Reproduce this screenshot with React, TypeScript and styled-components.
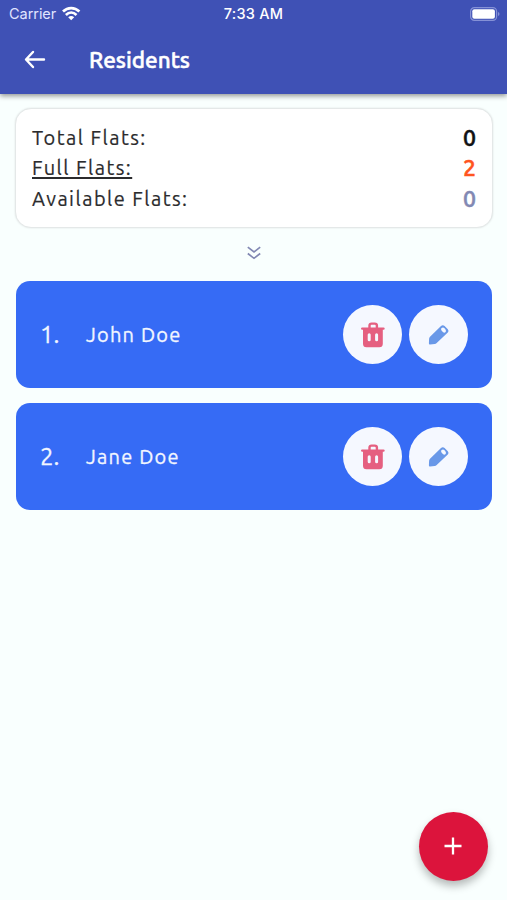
import React from "react";
import styled, { createGlobalStyle } from "styled-components";

const GlobalStyle = createGlobalStyle`
  *, *::before, *::after { box-sizing: border-box; }
  body { margin: 0; background: #f9fffe; }
`;

const Screen = styled.div`
  position: relative;
  height: 900px;
  overflow: hidden;
  background: #f9fffe;
  font-family: "Ubuntu", "Noto Sans", sans-serif;
  color: #2b2b2d;
`;

const Header = styled.header`
  height: 94px;
  background: #3f51b5;
  color: #fff;
  box-shadow: 0 2px 5px rgba(0, 0, 0, 0.42);
`;

const StatusBar = styled.div`
  display: grid;
  grid-template-columns: 1fr auto 1fr;
  align-items: center;
  height: 27px;
  padding: 0 7px 0 9px;
  font: 400 14.5px/27px Inter, sans-serif;
`;

const Carrier = styled.div`
  display: flex;
  align-items: center;
  gap: 6px;
  color: #e0e5ff;
  letter-spacing: -0.05px;
`;

const Clock = styled.time`
  margin-right: 2px;
  font-weight: 500;
  font-size: 14.5px;
  letter-spacing: 0.25px;
`;

const BatterySlot = styled.div`
  display: flex;
  justify-content: flex-end;
`;

const AppBar = styled.div`
  display: flex;
  align-items: center;
  height: 66px;
  padding-left: 23px;
`;

const IconButton = styled.button`
  display: flex;
  padding: 0;
  border: 0;
  background: none;
  color: inherit;
`;

const Title = styled.h1`
  margin: 0 0 0 42px;
  font-size: 22.5px;
  font-weight: 500;
  line-height: 30px;
  -webkit-text-stroke: 0.5px currentColor;
`;

const Summary = styled.section`
  height: 120px;
  margin: 14px 14px 0 15px;
  padding: 14px 16px 0 16px;
  border: 1px solid #e4e8e8;
  border-radius: 16px;
  background: #fff;
  box-shadow: 0 0 2px rgba(0, 0, 0, 0.12);
`;

const SummaryRow = styled.div`
  display: flex;
  justify-content: space-between;
  height: 30.4px;
  line-height: 30px;
`;

const Label = styled.span<{ $underlined?: boolean }>`
  font-size: 20px;
  font-weight: 400;
  letter-spacing: 1.45px;
  text-decoration: ${(p) => (p.$underlined ? "underline" : "none")};
  text-decoration-thickness: 1.5px;
  text-underline-offset: 2px;
  -webkit-text-stroke: 0.2px currentColor;
`;

const Count = styled.span<{ $color: string }>`
  color: ${(p) => p.$color};
  font-size: 23px;
  font-weight: 500;
  -webkit-text-stroke: 0.5px currentColor;
`;

const Expand = styled.div`
  display: flex;
  justify-content: center;
  height: 53px;
  padding-top: 16.5px;
`;

const List = styled.ul`
  display: grid;
  gap: 15px;
  margin: 0;
  padding: 0 15px 0 16px;
  list-style: none;
`;

const Resident = styled.li`
  display: flex;
  align-items: center;
  height: 107px;
  padding: 0 24px;
  border-radius: 14px;
  background: #366bf5;
  color: #f2f6ff;
  -webkit-text-stroke: 0.3px currentColor;
`;

const Index = styled.span`
  width: 46px;
  font-size: 24px;
  line-height: 30px;
`;

const Name = styled.span`
  flex: 1;
  font-size: 20px;
  line-height: 30px;
  letter-spacing: 1.2px;
`;

const Actions = styled.div`
  display: flex;
  gap: 7px;
`;

const RoundButton = styled.button<{ $color: string }>`
  display: flex;
  align-items: center;
  justify-content: center;
  width: 59px;
  height: 59px;
  padding: 0;
  border: 0;
  border-radius: 50%;
  background: #f5f8ff;
  color: ${(p) => p.$color};
`;

const AddButton = styled.button`
  position: absolute;
  right: 19.5px;
  bottom: 19.5px;
  display: flex;
  align-items: center;
  justify-content: center;
  width: 69px;
  height: 69px;
  padding: 0;
  border: 0;
  border-radius: 50%;
  background: #dc143c;
  color: #fff;
  box-shadow: 0 5px 9px rgba(0, 0, 0, 0.28);
`;

const WifiIcon = () => (
  <svg width="19" height="15" viewBox="0 0 19 15" fill="none" stroke="#fff" strokeWidth="2.7">
    <path d="M1 5.500C5.800 .9 12.600 .9 17.400 5.500" />
    <path d="M3.900 8.900C7.100 5.900 11.300 5.900 14.500 8.900" />
    <path d="M6.200 11.200Q9.200 8.700 12.200 11.200L9.200 14.300Z" fill="#fff" stroke="none" />
  </svg>
);

const BatteryIcon = () => (
  <svg width="30" height="14" viewBox="0 0 30 14">
    <rect x=".6" y=".6" width="26" height="12.8" rx="3.8" fill="none" stroke="#8591d6" strokeWidth="1.2" />
    <rect x="2.3" y="2.3" width="22.6" height="9.4" rx="2" fill="#fff" />
    <path d="M28 5c2 .7 2 3.300 0 4z" fill="#8591d6" />
  </svg>
);

const BackIcon = () => (
  <svg width="24" height="24" viewBox="0 0 24 24" fill="none" stroke="currentColor" strokeWidth="2.400" strokeLinecap="round" strokeLinejoin="round">
    <path d="M21 11.500H3.500M10 4L3 11.500l7 7.500" />
  </svg>
);

const ChevronsIcon = () => (
  <svg width="16" height="16" viewBox="0 0 16 16" fill="none" stroke="#8288b3" strokeWidth="1.7">
    <path d="M1.800 2.200L8 7l6.200-4.800M1.800 8.500L8 13.300l6.200-4.800" />
  </svg>
);

const TrashIcon = () => (
  <svg width="26" height="26" viewBox="0 0 26 26">
    <path
      d="M2.200 6.600h21.300M9.500 6V3.500Q9.500 1.600 11.500 1.600h3.200Q16.900 1.600 16.900 3.500V6"
      fill="none"
      stroke="currentColor"
      strokeWidth="2.400"
      strokeLinecap="round"
    />
    <path
      fill="currentColor"
      fillRule="evenodd"
      d="M3 6.500h19.800v15.300q0 3.500-3.500 3.500H6.500q-3.500 0-3.500-3.500zM9.200 11.200q-1.500 0-1.500 1.500v5.100q0 1.500 1.500 1.500t1.500-1.500v-5.100q0-1.500-1.500-1.500zm7.400 0q-1.500 0-1.500 1.500v5.100q0 1.500 1.500 1.500t1.500-1.500v-5.100q0-1.500-1.500-1.500z"
    />
  </svg>
);

const PencilIcon = () => (
  <svg width="22" height="22" viewBox="0 0 22 22">
    <path
      fill="currentColor"
      fillRule="evenodd"
      d="M13 1.900q1.800-1.500 3.600 0l3.200 3.300q1.500 1.700 0 3.300L8.700 19q-.9.900-2 1L2 20.500q-1.200.1-1.100-1.200l.2-4.500q.1-1.100.9-2zM13.600 4.100q1.500-1.100 2.900.2l1 1.200q1.100 1.400-.1 2.800-1.200 1-2.500-.3l-1.400-1.500q-1-1.400.1-2.400z"
    />
  </svg>
);

const PlusIcon = () => (
  <svg width="20" height="20" viewBox="0 0 20 20" stroke="currentColor" strokeWidth="2.300">
    <path d="M1.500 10h17M10 1.500v17" />
  </svg>
);

const summary = [
  { label: "Total Flats:", value: 0, color: "#111113" },
  { label: "Full Flats:", value: 2, color: "#ff5420", underlined: true },
  { label: "Available Flats:", value: 0, color: "#8288b3" },
];

const residents = ["John Doe", "Jane Doe"];

export default function App() {
  return (
    <Screen>
      <GlobalStyle />
      <Header>
        <StatusBar>
          <Carrier>
            Carrier
            <WifiIcon />
          </Carrier>
          <Clock>7:33 AM</Clock>
          <BatterySlot>
            <BatteryIcon />
          </BatterySlot>
        </StatusBar>
        <AppBar>
          <IconButton aria-label="Back">
            <BackIcon />
          </IconButton>
          <Title>Residents</Title>
        </AppBar>
      </Header>
      <Summary>
        {summary.map((row) => (
          <SummaryRow key={row.label}>
            <Label $underlined={row.underlined}>{row.label}</Label>
            <Count $color={row.color}>{row.value}</Count>
          </SummaryRow>
        ))}
      </Summary>
      <Expand>
        <ChevronsIcon />
      </Expand>
      <List>
        {residents.map((name, i) => (
          <Resident key={name}>
            <Index>{i + 1}.</Index>
            <Name>{name}</Name>
            <Actions>
              <RoundButton $color="#e55f80" aria-label="Delete">
                <TrashIcon />
              </RoundButton>
              <RoundButton $color="#6998e8" aria-label="Edit">
                <PencilIcon />
              </RoundButton>
            </Actions>
          </Resident>
        ))}
      </List>
      <AddButton aria-label="Add resident">
        <PlusIcon />
      </AddButton>
    </Screen>
  );
}
